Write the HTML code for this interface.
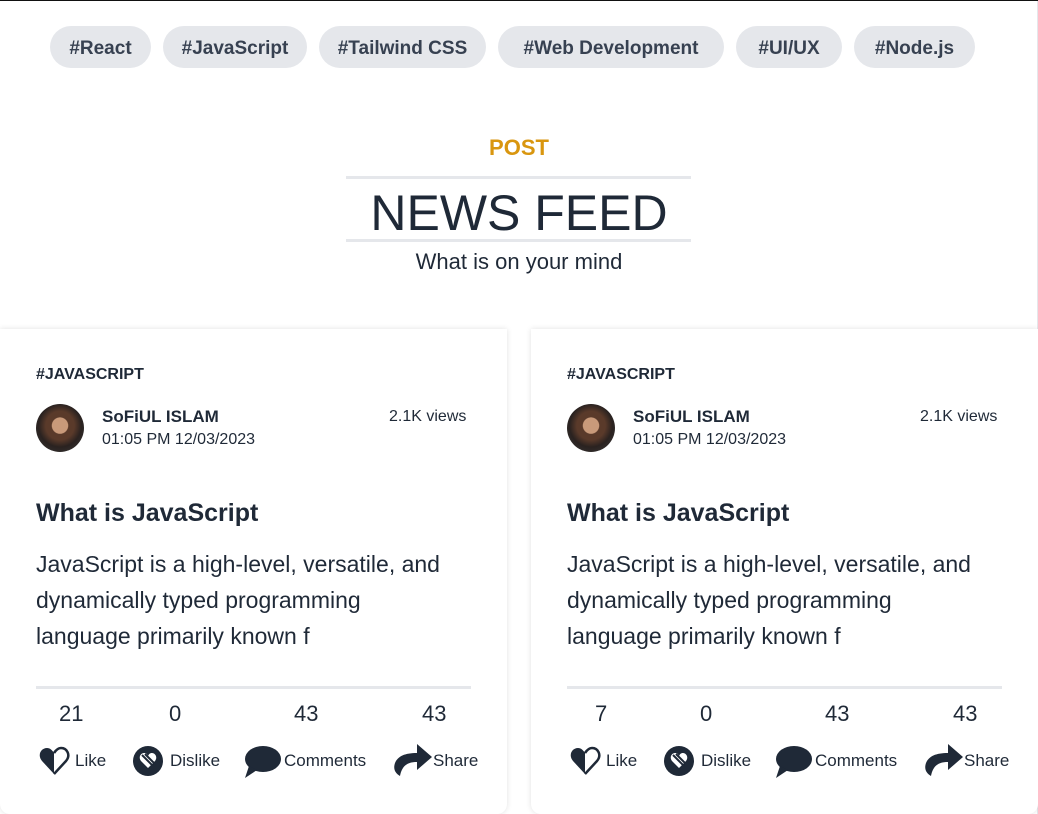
<!DOCTYPE html>
<html><head><meta charset="utf-8"><style>
*{margin:0;padding:0;box-sizing:border-box}
body{width:1038px;height:813px;overflow:hidden;background:#fff;font-family:"Liberation Sans","DejaVu Sans",sans-serif;color:#1f2937;position:relative;border-top:1px solid #111}
.a{position:absolute;white-space:nowrap}
.tag{position:absolute;top:25px;height:42px;background:#e5e7eb;border-radius:21px;font-size:19px;font-weight:bold;color:#374151;display:flex;align-items:center;justify-content:center;padding-top:3px}
.card{position:absolute;top:328px;height:485px;width:507px;background:#fff;border-radius:0 0 10px 10px;box-shadow:0 0 6px rgba(0,0,0,.12)}
.hr{position:absolute;height:3px;background:#e5e7eb}
.av{position:absolute;width:48px;height:48px;border-radius:50%;background:radial-gradient(circle at 50% 45%,#c99a7a 0 22%,#5a3a2a 24% 40%,#2a2220 60%,#3a3a3a 100%)}
svg{position:absolute}
</style></head><body>
<div class="tag" style="left:50px;width:101px">#React</div>
<div class="tag" style="left:163px;width:144px">#JavaScript</div>
<div class="tag" style="left:319px;width:167px">#Tailwind CSS</div>
<div class="tag" style="left:498px;width:226px">#Web Development</div>
<div class="tag" style="left:736px;width:106px">#UI/UX</div>
<div class="tag" style="left:854px;width:121px">#Node.js</div>

<div class="a" style="left:0;width:1038px;text-align:center;top:134px;font-size:22px;font-weight:bold;color:#d9960f">POST</div>
<div class="hr" style="left:346px;width:345px;top:175px"></div>
<div class="a" style="left:0;width:1038px;text-align:center;top:183px;font-size:50px;color:#1f2937">NEWS FEED</div>
<div class="hr" style="left:346px;width:345px;top:238px"></div>
<div class="a" style="left:0;width:1038px;text-align:center;top:248px;font-size:22px">What is on your mind</div>

<div style="position:absolute;right:0;top:0;width:1px;height:813px;background:#e5e7eb"></div>

<div class="card" style="left:0">
 <div class="a" style="left:36px;top:37px;font-size:16px;font-weight:bold">#JAVASCRIPT</div>
 <div class="av" style="left:36px;top:75px"></div>
 <div class="a" style="left:102px;top:78px;font-size:17px;font-weight:bold">SoFiUL ISLAM</div>
 <div class="a" style="left:102px;top:102px;font-size:16px">01:05 PM 12/03/2023</div>
 <div class="a" style="left:389px;top:79px;font-size:16px">2.1K views</div>
 <div class="a" style="left:36px;top:170px;font-size:25px;font-weight:bold">What is JavaScript</div>
 <div class="a" style="left:36px;top:217px;font-size:23px;line-height:36px">JavaScript is a high-level, versatile, and<br>dynamically typed programming<br>language primarily known f</div>
 <div class="hr" style="left:36px;width:435px;top:357px"></div>
 <div class="a" style="left:59px;top:372px;font-size:22px">21</div>
 <div class="a" style="left:169px;top:372px;font-size:22px">0</div>
 <div class="a" style="left:294px;top:372px;font-size:22px">43</div>
 <div class="a" style="left:422px;top:372px;font-size:22px">43</div>
 <svg style="left:38px;top:416px" width="32" height="32" viewBox="0 0 32 32"><path d="M16 29 L4 16 C-1 10 3 3 9 3 C12 3 14 5 16 8 L16 29Z" fill="#1f2937"/><path d="M16 29 L28 16 C33 10 29 3 23 3 C20 3 18 5 16 8" fill="none" stroke="#1f2937" stroke-width="2.5"/></svg>
 <div class="a" style="left:75px;top:422px;font-size:17px">Like</div>
 <svg style="left:133px;top:417px" width="30" height="30" viewBox="0 0 30 30"><circle cx="15" cy="15" r="15" fill="#1f2937"/><path d="M15 22 L8 15 C5 11 8 7 11 7 C13 7 14 8 15 10 C16 8 17 7 19 7 C22 7 25 11 22 15Z" fill="#fff"/><path d="M9 9 L21 21 M12 8 L22 18" stroke="#1f2937" stroke-width="2"/></svg>
 <div class="a" style="left:170px;top:422px;font-size:17px">Dislike</div>
 <svg style="left:244px;top:415px" width="38" height="36" viewBox="0 0 38 36"><ellipse cx="19" cy="15" rx="18" ry="13" fill="#1f2937"/><path d="M5 22 L1 34 L13 26Z" fill="#1f2937"/></svg>
 <div class="a" style="left:284px;top:422px;font-size:17px">Comments</div>
 <svg style="left:393px;top:414px" width="40" height="34" viewBox="0 0 40 34"><path d="M24 1 L39 14 L24 27 L24 19 C14 19 9 23 7 33 C2 30 0 26 2 20 C5 13 12 10 24 10Z" fill="#1f2937"/></svg>
 <div class="a" style="left:433px;top:422px;font-size:17px">Share</div>
</div>

<div class="card" style="left:531px">
 <div class="a" style="left:36px;top:37px;font-size:16px;font-weight:bold">#JAVASCRIPT</div>
 <div class="av" style="left:36px;top:75px"></div>
 <div class="a" style="left:102px;top:78px;font-size:17px;font-weight:bold">SoFiUL ISLAM</div>
 <div class="a" style="left:102px;top:102px;font-size:16px">01:05 PM 12/03/2023</div>
 <div class="a" style="left:389px;top:79px;font-size:16px">2.1K views</div>
 <div class="a" style="left:36px;top:170px;font-size:25px;font-weight:bold">What is JavaScript</div>
 <div class="a" style="left:36px;top:217px;font-size:23px;line-height:36px">JavaScript is a high-level, versatile, and<br>dynamically typed programming<br>language primarily known f</div>
 <div class="hr" style="left:36px;width:435px;top:357px"></div>
 <div class="a" style="left:64px;top:372px;font-size:22px">7</div>
 <div class="a" style="left:169px;top:372px;font-size:22px">0</div>
 <div class="a" style="left:294px;top:372px;font-size:22px">43</div>
 <div class="a" style="left:422px;top:372px;font-size:22px">43</div>
 <svg style="left:38px;top:416px" width="32" height="32" viewBox="0 0 32 32"><path d="M16 29 L4 16 C-1 10 3 3 9 3 C12 3 14 5 16 8 L16 29Z" fill="#1f2937"/><path d="M16 29 L28 16 C33 10 29 3 23 3 C20 3 18 5 16 8" fill="none" stroke="#1f2937" stroke-width="2.5"/></svg>
 <div class="a" style="left:75px;top:422px;font-size:17px">Like</div>
 <svg style="left:133px;top:417px" width="30" height="30" viewBox="0 0 30 30"><circle cx="15" cy="15" r="15" fill="#1f2937"/><path d="M15 22 L8 15 C5 11 8 7 11 7 C13 7 14 8 15 10 C16 8 17 7 19 7 C22 7 25 11 22 15Z" fill="#fff"/><path d="M9 9 L21 21 M12 8 L22 18" stroke="#1f2937" stroke-width="2"/></svg>
 <div class="a" style="left:170px;top:422px;font-size:17px">Dislike</div>
 <svg style="left:244px;top:415px" width="38" height="36" viewBox="0 0 38 36"><ellipse cx="19" cy="15" rx="18" ry="13" fill="#1f2937"/><path d="M5 22 L1 34 L13 26Z" fill="#1f2937"/></svg>
 <div class="a" style="left:284px;top:422px;font-size:17px">Comments</div>
 <svg style="left:393px;top:414px" width="40" height="34" viewBox="0 0 40 34"><path d="M24 1 L39 14 L24 27 L24 19 C14 19 9 23 7 33 C2 30 0 26 2 20 C5 13 12 10 24 10Z" fill="#1f2937"/></svg>
 <div class="a" style="left:433px;top:422px;font-size:17px">Share</div>
</div>
</body></html>
